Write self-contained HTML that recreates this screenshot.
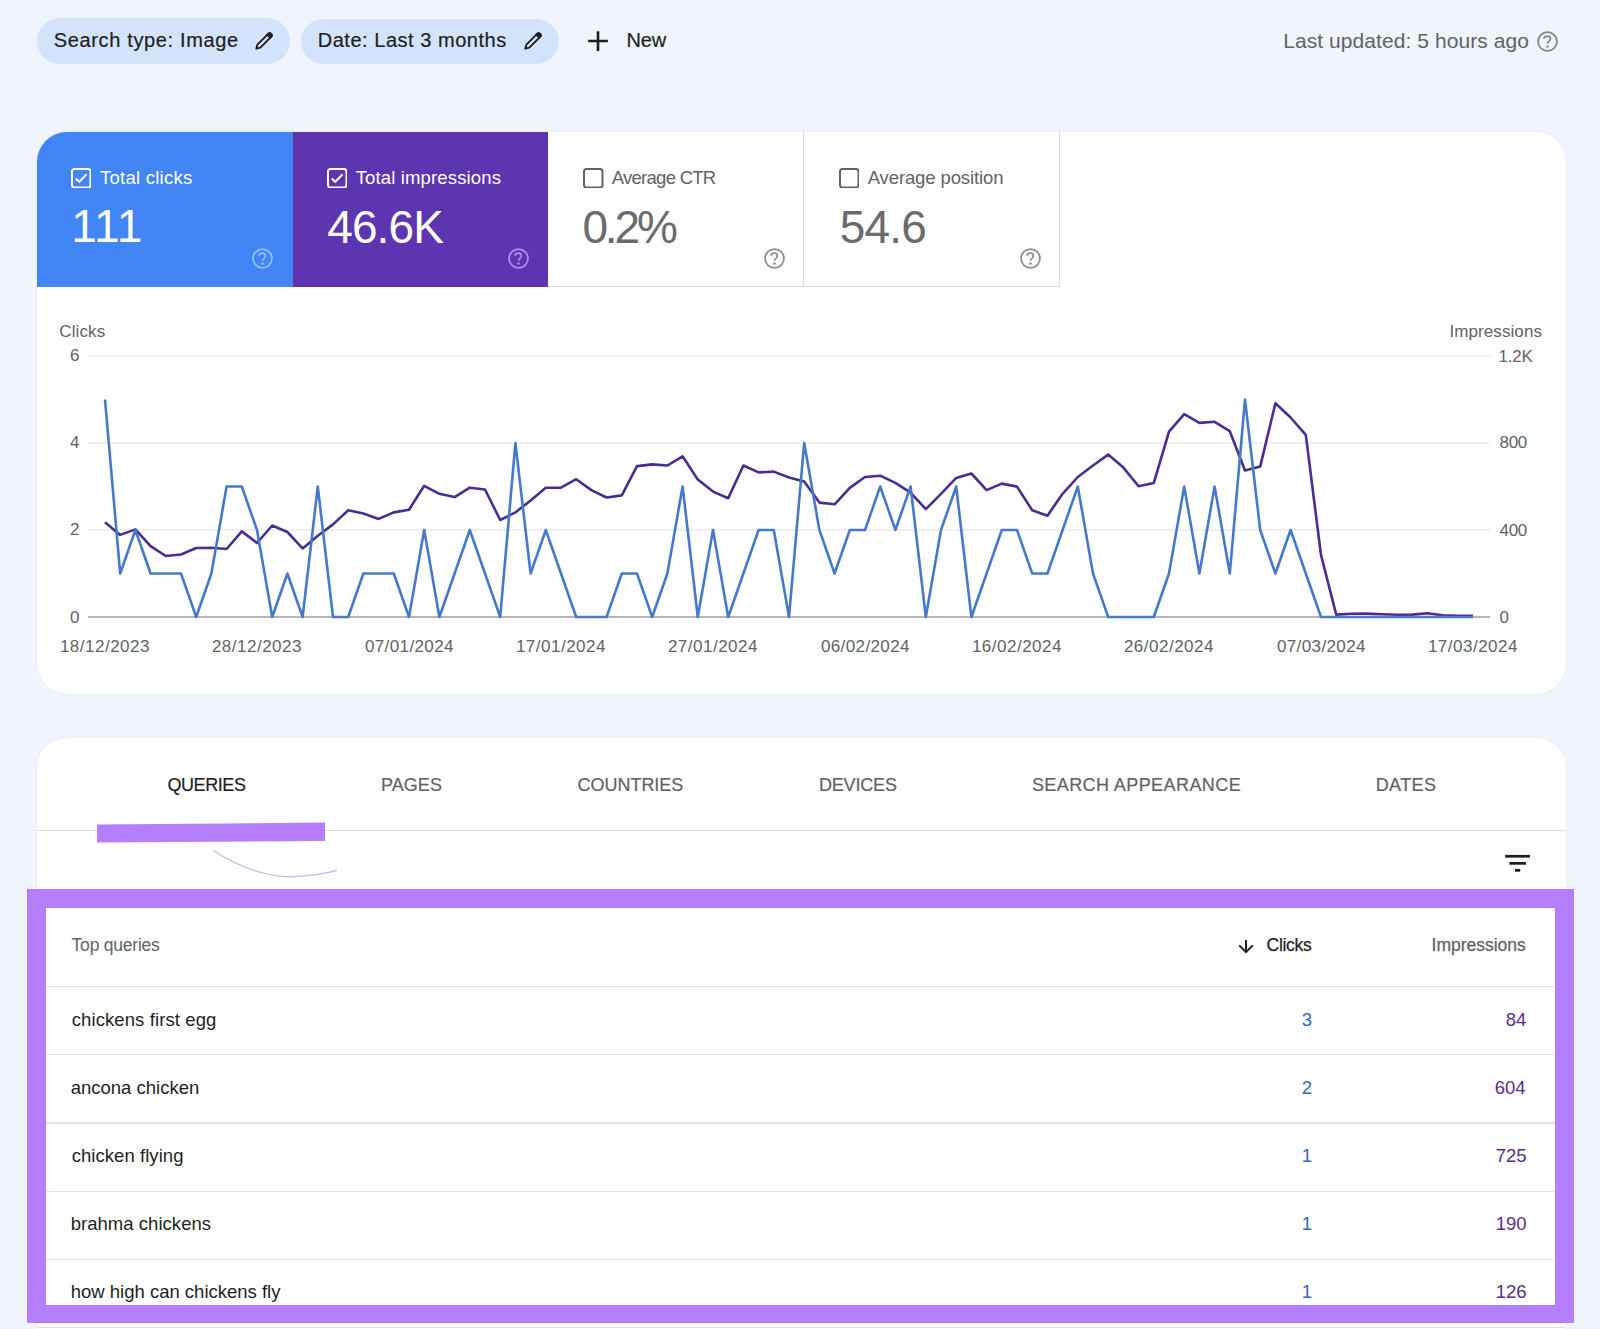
<!DOCTYPE html>
<html><head><meta charset="utf-8">
<style>
*{margin:0;padding:0;box-sizing:border-box}
html,body{width:1600px;height:1329px;overflow:hidden}
body{background:#f0f4fd;font-family:"Liberation Sans",sans-serif;position:relative}
.abs{position:absolute}
.t{position:absolute;white-space:nowrap;line-height:1}
.chip{position:absolute;background:#d4e3fc;border-radius:23px}
.row{position:absolute;left:45.8px;width:1509.5px;height:1.3px;background:#e3e3e3}
</style></head><body>
<div class="chip" style="left:37px;top:18.4px;width:253px;height:45.6px"></div>
<div class="chip" style="left:301.2px;top:18.6px;width:257.6px;height:45.2px"></div>
<svg class="abs" style="left:250px;top:28px" width="26" height="26" viewBox="0 0 26 26"><g transform="translate(5.6,21.4) rotate(-45)"><path d="M1 0 L4.6 -2.1 H19.8 A2.1 2.1 0 0 1 19.8 2.1 H4.6 Z" fill="none" stroke="#1f1f1f" stroke-width="1.9" stroke-linejoin="round"/><path d="M17.6 -3.05 H19.8 A3.05 3.05 0 0 1 19.8 3.05 H17.6 Z" fill="#1f1f1f"/></g></svg>
<svg class="abs" style="left:518.5px;top:28px" width="26" height="26" viewBox="0 0 26 26"><g transform="translate(5.6,21.4) rotate(-45)"><path d="M1 0 L4.6 -2.1 H19.8 A2.1 2.1 0 0 1 19.8 2.1 H4.6 Z" fill="none" stroke="#1f1f1f" stroke-width="1.9" stroke-linejoin="round"/><path d="M17.6 -3.05 H19.8 A3.05 3.05 0 0 1 19.8 3.05 H17.6 Z" fill="#1f1f1f"/></g></svg>
<svg class="abs" style="left:586.1px;top:29.1px" width="24" height="24" viewBox="0 0 24 24"><path d="M12 2.3 V22.1 M2.2 12 H21.9" stroke="#1f1f1f" stroke-width="2.6"/></svg>
<svg class="abs" style="left:1536.70px;top:30.80px" width="21" height="21" viewBox="0 0 24 24"><circle cx="12" cy="12" r="10.8" fill="none" stroke="#80868b" stroke-width="2.0"/><path d="M8 8.9 Q8 5.9 12 5.9 Q15.3 5.9 15.3 8.8 Q15.3 10.5 13.6 11.8 Q12 13 12 14.7" fill="none" stroke="#80868b" stroke-width="2.0"/><circle cx="12" cy="17.7" r="1.35" fill="#80868b"/></svg>

<div class="abs" style="left:36.5px;top:131.8px;width:1529.3px;height:562px;border-radius:30px;background:#fff;box-shadow:0 0 2px rgba(60,64,67,0.12)"></div>
<div class="abs" style="left:37px;top:132px;width:256px;height:155px;background:#4285f4;border-top-left-radius:30px"></div>
<div class="abs" style="left:293px;top:132px;width:255px;height:155px;background:#5e35b1"></div>
<div class="abs" style="left:548px;top:132px;width:256px;height:155px;border-right:1px solid #dadce0;border-bottom:1px solid #dadce0"></div>
<div class="abs" style="left:804px;top:132px;width:256px;height:155px;border-right:1px solid #dadce0;border-bottom:1px solid #dadce0"></div>
<svg class="abs" style="left:70.8px;top:167.6px" width="20.5" height="20.5" viewBox="0 0 20.5 20.5"><rect x="1" y="1" width="18.5" height="18.5" rx="2.6" fill="none" stroke="#fff" stroke-width="2"/><path d="M4.7 10.5 L8.3 13.8 L15.6 6.3" fill="none" stroke="#fff" stroke-width="2"/></svg>
<svg class="abs" style="left:326.5px;top:167.6px" width="20.5" height="20.5" viewBox="0 0 20.5 20.5"><rect x="1" y="1" width="18.5" height="18.5" rx="2.6" fill="none" stroke="#fff" stroke-width="2"/><path d="M4.7 10.5 L8.3 13.8 L15.6 6.3" fill="none" stroke="#fff" stroke-width="2"/></svg>
<svg class="abs" style="left:583.0px;top:167.6px" width="20.5" height="20.5" viewBox="0 0 20.5 20.5"><rect x="1" y="1" width="18.5" height="18.5" rx="2.6" fill="none" stroke="#5f6368" stroke-width="2"/></svg>
<svg class="abs" style="left:838.5px;top:167.6px" width="20.5" height="20.5" viewBox="0 0 20.5 20.5"><rect x="1" y="1" width="18.5" height="18.5" rx="2.6" fill="none" stroke="#5f6368" stroke-width="2"/></svg>

<svg class="abs" style="left:252.40px;top:247.60px" width="21" height="21" viewBox="0 0 24 24"><circle cx="12" cy="12" r="10.8" fill="none" stroke="#8fc3fd" stroke-width="2.0"/><path d="M8 8.9 Q8 5.9 12 5.9 Q15.3 5.9 15.3 8.8 Q15.3 10.5 13.6 11.8 Q12 13 12 14.7" fill="none" stroke="#8fc3fd" stroke-width="2.0"/><circle cx="12" cy="17.7" r="1.35" fill="#8fc3fd"/></svg><svg class="abs" style="left:507.90px;top:247.50px" width="21" height="21" viewBox="0 0 24 24"><circle cx="12" cy="12" r="10.8" fill="none" stroke="#b48cf5" stroke-width="2.0"/><path d="M8 8.9 Q8 5.9 12 5.9 Q15.3 5.9 15.3 8.8 Q15.3 10.5 13.6 11.8 Q12 13 12 14.7" fill="none" stroke="#b48cf5" stroke-width="2.0"/><circle cx="12" cy="17.7" r="1.35" fill="#b48cf5"/></svg><svg class="abs" style="left:763.70px;top:247.50px" width="21" height="21" viewBox="0 0 24 24"><circle cx="12" cy="12" r="10.8" fill="none" stroke="#8a8d90" stroke-width="2.0"/><path d="M8 8.9 Q8 5.9 12 5.9 Q15.3 5.9 15.3 8.8 Q15.3 10.5 13.6 11.8 Q12 13 12 14.7" fill="none" stroke="#8a8d90" stroke-width="2.0"/><circle cx="12" cy="17.7" r="1.35" fill="#8a8d90"/></svg><svg class="abs" style="left:1019.70px;top:247.50px" width="21" height="21" viewBox="0 0 24 24"><circle cx="12" cy="12" r="10.8" fill="none" stroke="#8a8d90" stroke-width="2.0"/><path d="M8 8.9 Q8 5.9 12 5.9 Q15.3 5.9 15.3 8.8 Q15.3 10.5 13.6 11.8 Q12 13 12 14.7" fill="none" stroke="#8a8d90" stroke-width="2.0"/><circle cx="12" cy="17.7" r="1.35" fill="#8a8d90"/></svg>

<svg class="abs" style="left:0;top:0" width="1600" height="700">
<line x1="88" y1="356" x2="1490" y2="356" stroke="#ebebeb" stroke-width="1.3"/>
<line x1="88" y1="443" x2="1490" y2="443" stroke="#ebebeb" stroke-width="1.3"/>
<line x1="88" y1="530" x2="1490" y2="530" stroke="#ebebeb" stroke-width="1.3"/>
<line x1="88" y1="617" x2="1490" y2="617" stroke="#9e9e9e" stroke-width="1.4"/>
<polyline points="105.0,522.2 120.2,534.9 135.4,529.4 150.6,546.2 165.8,556.0 181.0,554.5 196.2,548.0 211.4,547.7 226.6,549.0 241.8,531.4 257.0,543.0 272.2,525.5 287.4,532.0 302.6,548.4 317.8,535.8 333.0,524.4 348.2,510.2 363.4,513.5 378.6,518.9 393.8,512.4 409.0,509.8 424.2,485.8 439.4,493.8 454.6,497.1 469.8,487.7 485.0,489.5 500.2,520.0 515.4,512.4 530.6,500.4 545.8,487.7 561.0,487.7 576.2,479.2 591.4,490.1 606.6,497.5 621.8,495.4 637.0,466.1 652.2,464.4 667.4,465.5 682.6,456.3 697.8,479.6 713.0,491.6 728.2,498.2 743.4,465.5 758.6,472.4 773.8,471.6 789.0,477.5 804.2,481.4 819.4,502.6 834.6,504.3 849.8,487.9 865.0,477.0 880.2,475.7 895.4,482.9 910.6,492.7 925.8,509.1 941.0,493.8 956.2,477.9 971.4,473.5 986.6,490.1 1001.8,483.6 1017.0,486.6 1032.2,510.2 1047.4,515.7 1062.6,493.8 1077.8,477.0 1093.0,465.5 1108.2,454.6 1123.4,467.6 1138.6,486.2 1153.8,482.9 1169.0,431.6 1184.2,414.2 1199.4,422.9 1214.6,421.8 1229.8,431.2 1245.0,470.5 1260.2,466.6 1275.4,403.3 1290.6,417.5 1305.8,434.9 1321.0,554.9 1336.2,614.6 1351.4,613.8 1366.6,613.6 1381.8,614.2 1397.0,614.8 1412.2,614.6 1427.4,613.2 1442.6,615.2 1457.8,615.8 1473.0,615.8" fill="none" stroke="#4d2c92" stroke-width="2.6" stroke-linejoin="round"/>
<polyline points="105.0,399.5 120.2,573.5 135.4,530.0 150.6,573.5 165.8,573.5 181.0,573.5 196.2,617.0 211.4,573.5 226.6,486.5 241.8,486.5 257.0,530.0 272.2,617.0 287.4,573.5 302.6,617.0 317.8,486.5 333.0,617.0 348.2,617.0 363.4,573.5 378.6,573.5 393.8,573.5 409.0,617.0 424.2,530.0 439.4,617.0 454.6,573.5 469.8,530.0 485.0,573.5 500.2,617.0 515.4,443.0 530.6,573.5 545.8,530.0 561.0,573.5 576.2,617.0 591.4,617.0 606.6,617.0 621.8,573.5 637.0,573.5 652.2,617.0 667.4,573.5 682.6,486.5 697.8,617.0 713.0,530.0 728.2,617.0 743.4,573.5 758.6,530.0 773.8,530.0 789.0,617.0 804.2,443.0 819.4,530.0 834.6,573.5 849.8,530.0 865.0,530.0 880.2,486.5 895.4,530.0 910.6,486.5 925.8,617.0 941.0,530.0 956.2,486.5 971.4,617.0 986.6,573.5 1001.8,530.0 1017.0,530.0 1032.2,573.5 1047.4,573.5 1062.6,530.0 1077.8,486.5 1093.0,573.5 1108.2,617.0 1123.4,617.0 1138.6,617.0 1153.8,617.0 1169.0,573.5 1184.2,486.5 1199.4,573.5 1214.6,486.5 1229.8,573.5 1245.0,399.5 1260.2,530.0 1275.4,573.5 1290.6,530.0 1305.8,573.5 1321.0,617.0 1336.2,617.0 1351.4,617.0 1366.6,617.0 1381.8,617.0 1397.0,617.0 1412.2,617.0 1427.4,617.0 1442.6,617.0 1457.8,617.0 1473.0,617.0" fill="none" stroke="#4579cc" stroke-width="2.6" stroke-linejoin="round"/>
</svg>

<div class="abs" style="left:36.5px;top:738px;width:1529.3px;height:700px;border-radius:29px;background:#fff;box-shadow:0 0 2px rgba(60,64,67,0.12)"></div>
<div class="abs" style="left:37px;top:829.5px;width:1528px;height:1.3px;background:#dadce0"></div>
<svg class="abs" style="left:0;top:800px" width="400" height="100"><polygon points="97,24.4 325,22.6 325,41 97,42.6" fill="#b57ffc"/><path d="M213 50.4 Q260 80 300 76.4 Q320 75 337 70.4" fill="none" stroke="#c9b6ea" stroke-width="1.2"/></svg>
<svg class="abs" style="left:1500px;top:850px" width="34" height="26"><rect x="5.1" y="4.9" width="24.9" height="2.7" fill="#1f1f1f"/><rect x="9.4" y="12" width="16.6" height="2.7" fill="#1f1f1f"/><rect x="15" y="19" width="5.2" height="2.7" fill="#1f1f1f"/></svg>

<div class="abs" style="left:27.3px;top:889.3px;width:1546.5px;height:434px;background:#b57ffc"></div>
<div class="abs" style="left:45.8px;top:907.9px;width:1509.5px;height:397.1px;background:#fff"></div>
<div class="row" style="top:986.0px"></div>
<div class="row" style="top:1054.2px"></div>
<div class="row" style="top:1122.4px"></div>
<div class="row" style="top:1190.6px"></div>
<div class="row" style="top:1258.8px"></div>

<div class="abs" style="left:37px;top:1326.6px;width:1528px;height:1.3px;background:#e0e0e0"></div>
<svg class="abs" style="left:1236px;top:938px" width="20" height="17" viewBox="0 0 20 17"><path d="M10 2 V14.2 M3.2 7.4 L10 14.2 L16.8 7.4" fill="none" stroke="#1f1f1f" stroke-width="2"/></svg>
<div class="t" style="left:53.75px;top:30px;font-size:20px;color:#1f1f1f;letter-spacing:0.647px;-webkit-text-stroke:0.2px #1f1f1f">Search type: Image</div>
<div class="t" style="left:317.75px;top:30px;font-size:20px;color:#1f1f1f;letter-spacing:0.528px;-webkit-text-stroke:0.2px #1f1f1f">Date: Last 3 months</div>
<div class="t" style="left:626.50px;top:30px;font-size:20px;color:#1f1f1f;letter-spacing:-0.125px;-webkit-text-stroke:0.2px #1f1f1f">New</div>
<div class="t" style="left:1283.20px;top:30px;font-size:21px;color:#5f6368;letter-spacing:0.071px">Last updated: 5 hours ago</div>
<div class="t" style="left:100.00px;top:169px;font-size:18.5px;color:#fff;letter-spacing:0.245px">Total clicks</div>
<div class="t" style="left:71.20px;top:203px;font-size:46px;color:#fff;letter-spacing:0.650px">111</div>
<div class="t" style="left:355.70px;top:169px;font-size:18.5px;color:#fff;letter-spacing:0.144px">Total impressions</div>
<div class="t" style="left:327.20px;top:204px;font-size:46px;color:#fff;letter-spacing:-0.875px">46.6K</div>
<div class="t" style="left:611.70px;top:169px;font-size:18.5px;color:#5f6368;letter-spacing:-0.720px">Average CTR</div>
<div class="t" style="left:582.40px;top:204px;font-size:46px;color:#6b6b6b;letter-spacing:-3.100px">0.2%</div>
<div class="t" style="left:867.70px;top:169px;font-size:18.5px;color:#5f6368;letter-spacing:-0.113px">Average position</div>
<div class="t" style="left:839.80px;top:204px;font-size:46px;color:#6b6b6b;letter-spacing:-0.867px">54.6</div>
<div class="t" style="left:59.30px;top:323px;font-size:17px;color:#5f6368;letter-spacing:0.100px">Clicks</div>
<div class="t" style="left:1449.50px;top:323px;font-size:17px;color:#5f6368;letter-spacing:0.080px">Impressions</div>
<div class="t" style="left:69.90px;top:347px;font-size:17px;color:#5f6368">6</div>
<div class="t" style="left:69.90px;top:434px;font-size:17px;color:#5f6368">4</div>
<div class="t" style="left:69.90px;top:521px;font-size:17px;color:#5f6368">2</div>
<div class="t" style="left:69.90px;top:609px;font-size:17px;color:#5f6368">0</div>
<div class="t" style="left:1498.60px;top:348px;font-size:17px;color:#5f6368;letter-spacing:-0.267px">1.2K</div>
<div class="t" style="left:1499.60px;top:434px;font-size:17px;color:#5f6368;letter-spacing:-0.350px">800</div>
<div class="t" style="left:1499.60px;top:522px;font-size:17px;color:#5f6368;letter-spacing:-0.350px">400</div>
<div class="t" style="left:1499.60px;top:609px;font-size:17px;color:#5f6368">0</div>
<div class="t" style="left:59.90px;top:638px;font-size:17px;color:#5f6368;letter-spacing:0.500px">18/12/2023</div>
<div class="t" style="left:211.90px;top:638px;font-size:17px;color:#5f6368;letter-spacing:0.500px">28/12/2023</div>
<div class="t" style="left:364.90px;top:638px;font-size:17px;color:#5f6368;letter-spacing:0.389px">07/01/2024</div>
<div class="t" style="left:515.90px;top:638px;font-size:17px;color:#5f6368;letter-spacing:0.500px">17/01/2024</div>
<div class="t" style="left:667.90px;top:638px;font-size:17px;color:#5f6368;letter-spacing:0.500px">27/01/2024</div>
<div class="t" style="left:820.90px;top:638px;font-size:17px;color:#5f6368;letter-spacing:0.389px">06/02/2024</div>
<div class="t" style="left:971.90px;top:638px;font-size:17px;color:#5f6368;letter-spacing:0.500px">16/02/2024</div>
<div class="t" style="left:1123.90px;top:638px;font-size:17px;color:#5f6368;letter-spacing:0.500px">26/02/2024</div>
<div class="t" style="left:1276.90px;top:638px;font-size:17px;color:#5f6368;letter-spacing:0.389px">07/03/2024</div>
<div class="t" style="left:1427.90px;top:638px;font-size:17px;color:#5f6368;letter-spacing:0.500px">17/03/2024</div>
<div class="t" style="left:167.40px;top:776px;font-size:18px;color:#1f1f1f;letter-spacing:-0.417px;-webkit-text-stroke:0.2px #1f1f1f">QUERIES</div>
<div class="t" style="left:381.00px;top:776px;font-size:18px;color:#5f6368;letter-spacing:0.050px;-webkit-text-stroke:0.2px #5f6368">PAGES</div>
<div class="t" style="left:577.60px;top:776px;font-size:18px;color:#5f6368;letter-spacing:-0.037px;-webkit-text-stroke:0.2px #5f6368">COUNTRIES</div>
<div class="t" style="left:818.90px;top:776px;font-size:18px;color:#5f6368;letter-spacing:-0.167px;-webkit-text-stroke:0.2px #5f6368">DEVICES</div>
<div class="t" style="left:1031.90px;top:776px;font-size:18px;color:#5f6368;letter-spacing:0.419px;-webkit-text-stroke:0.2px #5f6368">SEARCH APPEARANCE</div>
<div class="t" style="left:1375.70px;top:776px;font-size:18px;color:#5f6368;letter-spacing:0.400px;-webkit-text-stroke:0.2px #5f6368">DATES</div>
<div class="t" style="left:71.60px;top:937px;font-size:17.5px;color:#5f6368;letter-spacing:-0.220px">Top queries</div>
<div class="t" style="left:1266.60px;top:937px;font-size:17.5px;color:#1f1f1f;letter-spacing:-0.320px;-webkit-text-stroke:0.25px #1f1f1f">Clicks</div>
<div class="t" style="left:1431.60px;top:937px;font-size:17.5px;color:#5f6368;letter-spacing:-0.020px;-webkit-text-stroke:0.25px #5f6368">Impressions</div>
<div class="t" style="left:71.70px;top:1011px;font-size:18.5px;color:#1f1f1f;letter-spacing:0.100px">chickens first egg</div>
<div class="t" style="left:1301.70px;top:1011px;font-size:18.5px;color:#3068b0">3</div>
<div class="t" style="left:1505.70px;top:1011px;font-size:18.5px;color:#5b2c86">84</div>
<div class="t" style="left:70.70px;top:1079px;font-size:18.5px;color:#1f1f1f">ancona chicken</div>
<div class="t" style="left:1301.70px;top:1079px;font-size:18.5px;color:#3068b0">2</div>
<div class="t" style="left:1494.70px;top:1079px;font-size:18.5px;color:#5b2c86">604</div>
<div class="t" style="left:71.70px;top:1147px;font-size:18.5px;color:#1f1f1f;letter-spacing:0.054px">chicken flying</div>
<div class="t" style="left:1301.70px;top:1147px;font-size:18.5px;color:#3068b0">1</div>
<div class="t" style="left:1495.70px;top:1147px;font-size:18.5px;color:#5b2c86">725</div>
<div class="t" style="left:70.70px;top:1215px;font-size:18.5px;color:#1f1f1f;letter-spacing:0.036px">brahma chickens</div>
<div class="t" style="left:1301.70px;top:1215px;font-size:18.5px;color:#3068b0">1</div>
<div class="t" style="left:1495.70px;top:1215px;font-size:18.5px;color:#5b2c86">190</div>
<div class="t" style="left:70.70px;top:1283px;font-size:18.5px;color:#1f1f1f">how high can chickens fly</div>
<div class="t" style="left:1301.70px;top:1283px;font-size:18.5px;color:#3068b0">1</div>
<div class="t" style="left:1495.70px;top:1283px;font-size:18.5px;color:#5b2c86">126</div>
</body></html>
